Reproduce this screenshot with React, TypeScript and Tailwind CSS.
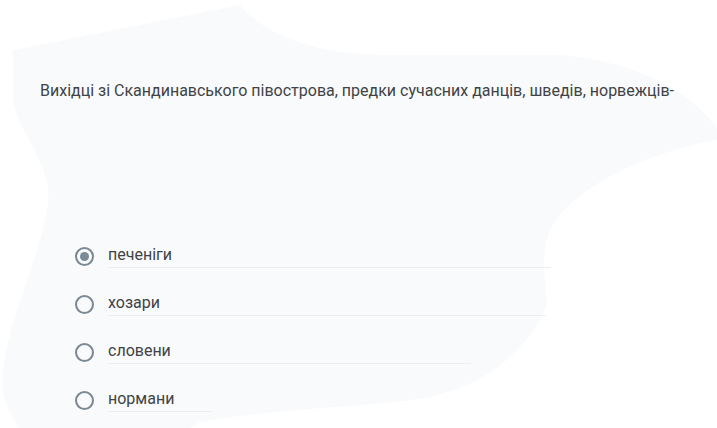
import { useState } from "react";

const options = [
	{ label: "печеніги", lineWidth: "w-[443px]" },
	{ label: "хозари", lineWidth: "w-[438px]" },
	{ label: "словени", lineWidth: "w-[363px]" },
	{ label: "нормани", lineWidth: "w-[104px]" },
];

function Blob() {
	// soft decorative backdrop behind the question card
	return (
		<svg className="absolute inset-0" width="717" height="428" viewBox="0 0 717 428">
			<path
				d="M13 50 C 90 35, 190 15, 240 5 C 262 30, 300 52, 380 55 L 560 55 C 640 62, 690 92, 717 128 L 717 140 C 660 150, 600 175, 567 207 C 545 228, 540 250, 547 300 C 545 320, 520 355, 483 377 C 450 395, 420 400, 383 403 C 330 408, 250 412, 200 422 L 190 428 L 20 428 C 5 410, 0 390, 3 370 C 8 330, 25 290, 37 250 C 48 215, 50 195, 47 183 C 40 150, 18 130, 13 100 Z"
				fill="#f9fafb"
			/>
		</svg>
	);
}

function Radio({ checked }: { checked: boolean }) {
	return (
		<div className="flex h-[19px] w-[19px] shrink-0 items-center justify-center rounded-full border-2 border-[#7b8893]">
			{checked && <div className="h-[9px] w-[9px] rounded-full bg-[#7b8a96]" />}
		</div>
	);
}

export default function App() {
	const [selected, setSelected] = useState(0);

	return (
		<div className="relative h-[428px] w-[717px] overflow-hidden bg-white font-['Roboto',sans-serif]">
			<Blob />
			<div className="relative pl-10 pt-[81px]">
				<p className="text-[16px] leading-5 text-[#404346]">
					Вихідці зі Скандинавського півострова, предки сучасних данців, шведів, норвежців-
				</p>
				<div className="mt-[131px] flex flex-col pl-[35px]">
					{options.map((opt, i) => (
						<label
							key={opt.label}
							className="flex h-12 cursor-pointer items-center gap-[14px]"
							onClick={() => setSelected(i)}
						>
							<Radio checked={selected === i} />
							<div
								className={`${opt.lineWidth} border-b border-[#eceef0] pb-[1px] text-[16px] leading-[22px] text-[#404346]`}
							>
								{opt.label}
							</div>
						</label>
					))}
				</div>
			</div>
		</div>
	);
}
